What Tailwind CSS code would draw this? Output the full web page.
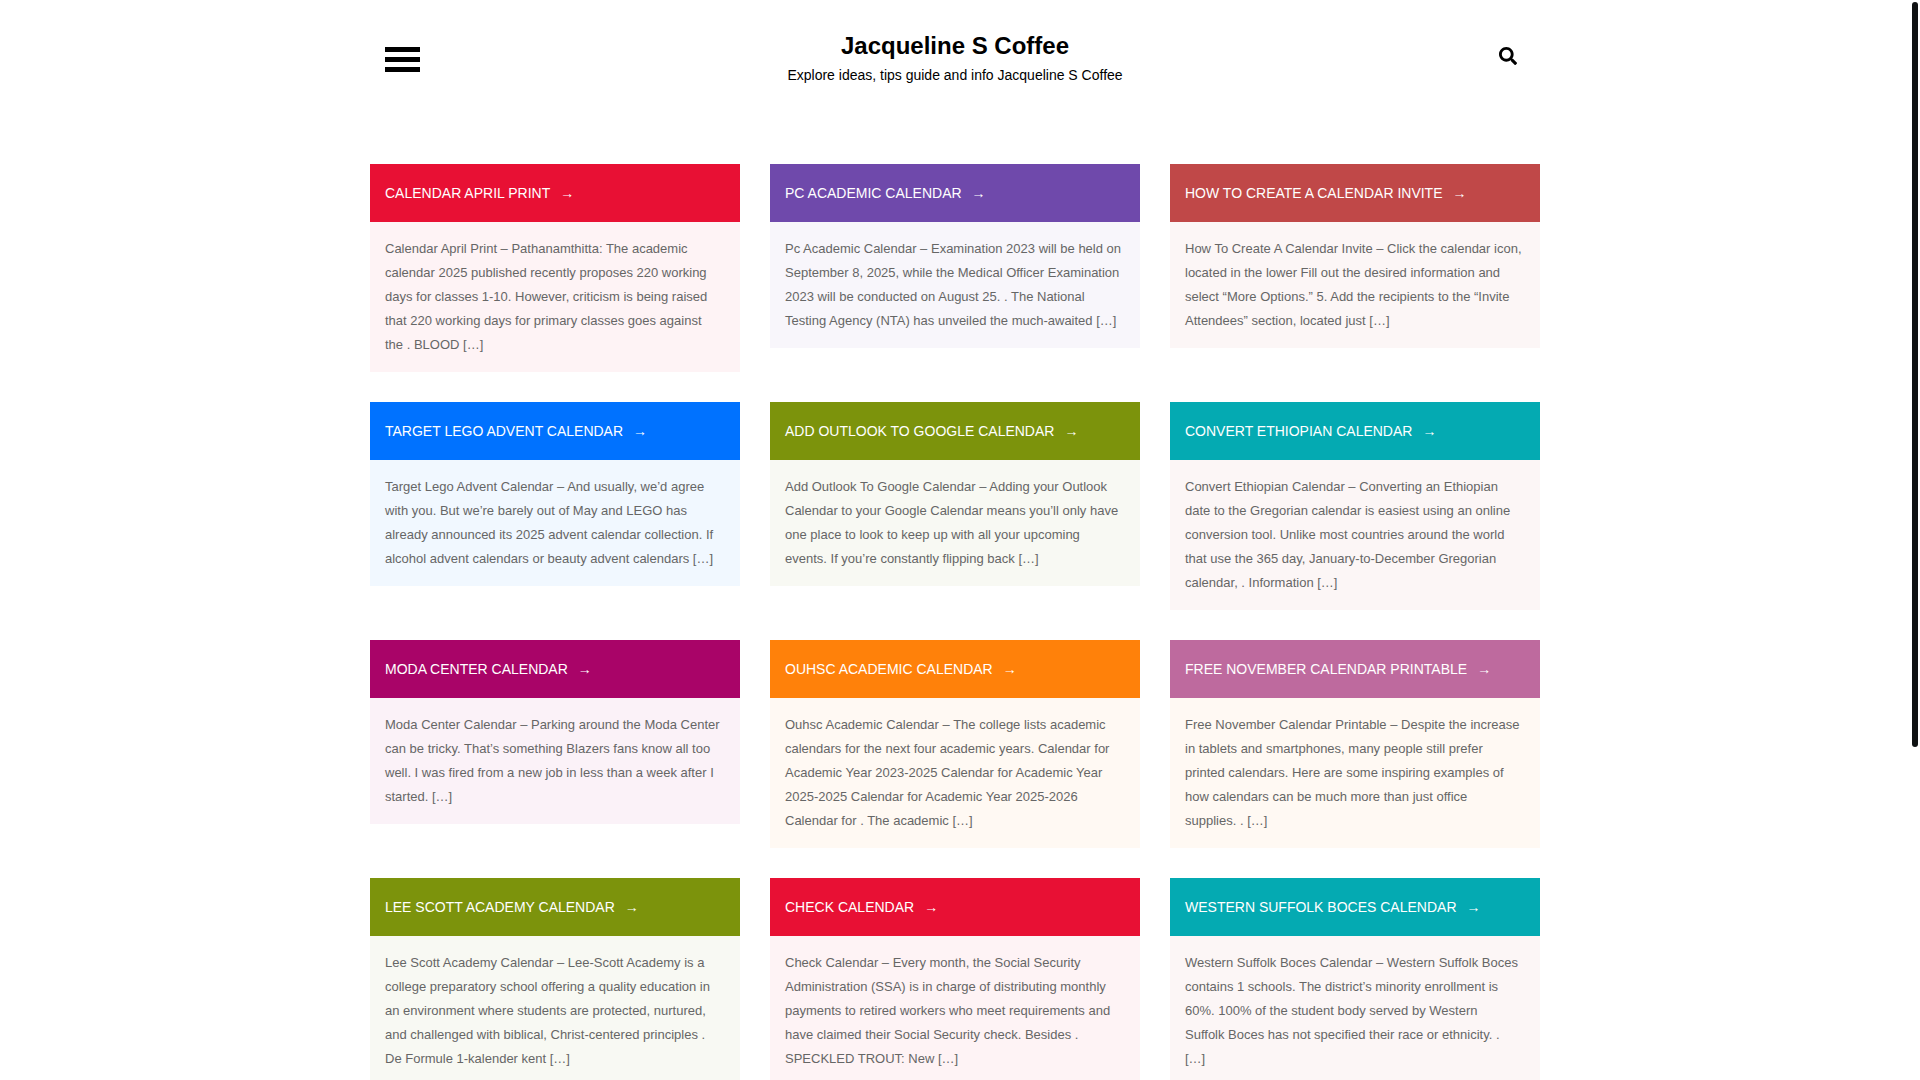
<!DOCTYPE html>
<html lang="en">
<head>
    <meta charset="UTF-8">
    <meta name="viewport" content="width=device-width, initial-scale=1.0">
    <script src="https://cdn.jsdelivr.net/npm/@tailwindcss/browser@4"></script>
    <title>Jacqueline S Coffee</title>
</head>
<body class="bg-white pr-[10px] font-['Liberation_Sans',Arial,sans-serif] text-black">
    <header class="max-w-[1170px] mx-auto px-[15px] pt-[30px] pb-[76px] grid grid-cols-[1fr_auto_1fr] items-start">
        <button type="button" aria-label="Menu" class="mt-[17px] w-[35px] flex flex-col gap-[5px] cursor-pointer">
            <span class="w-full h-[5px] bg-black"></span>
            <span class="w-full h-[5px] bg-black"></span>
            <span class="w-full h-[5px] bg-black"></span>
        </button>
        <div class="text-center">
            <h1 class="text-[24px] leading-8 font-bold"><a href="#">Jacqueline S Coffee</a></h1>
            <p class="text-[14px] leading-[26px]">Explore ideas, tips guide and info Jacqueline S Coffee</p>
        </div>
        <button type="button" aria-label="Search" class="mt-[17px] mr-[8px] justify-self-end cursor-pointer">
            <svg class="w-[18px] h-[18px]" fill="currentColor" viewBox="0 0 512 512" xmlns="http://www.w3.org/2000/svg">
                <path d="M505 442.700L405.300 343c-4.500-4.500-10.600-7-17-7H372c27.600-35.300 44-79.700 44-128C416 93.100 322.900 0 208 0S0 93.100 0 208s93.100 208 208 208c48.300 0 92.700-16.400 128-44v16.300c0 6.400 2.500 12.500 7 17l99.700 99.700c9.400 9.400 24.600 9.400 33.900 0l28.300-28.300c9.400-9.400 9.400-24.600.1-34zM208 336c-70.700 0-128-57.200-128-128 0-70.700 57.200-128 128-128 70.700 0 128 57.200 128 128 0 70.700-57.200 128-128 128z"></path>
            </svg>
        </button>
    </header>

    <main class="max-w-[1170px] mx-auto grid grid-cols-1 md:grid-cols-3 gap-[30px] items-start pb-[30px]">
        <article class="bg-[#fef3f5]">
            <h2 class="bg-[#e81034] px-[15px] py-[15px] text-[14px] leading-7 text-white uppercase"><a href="#">Calendar April Print<span class="ml-[10px]">→</span></a></h2>
            <p class="px-[15px] py-[15px] text-[13px] leading-6 text-[#666666]">Calendar April Print – Pathanamthitta: The academic calendar 2025 published recently proposes 220 working days for classes 1-10. However, criticism is being raised that 220 working days for primary classes goes against <br>the . BLOOD […]</p>
        </article>
        <article class="bg-[#f8f6fb]">
            <h2 class="bg-[#6f49ab] px-[15px] py-[15px] text-[14px] leading-7 text-white uppercase"><a href="#">Pc Academic Calendar<span class="ml-[10px]">→</span></a></h2>
            <p class="px-[15px] py-[15px] text-[13px] leading-6 text-[#666666]">Pc Academic Calendar – Examination 2023 will be held on September 8, 2025, while the Medical Officer Examination 2023 will be conducted on August 25. . The National Testing Agency (NTA) has unveiled the much-awaited […]</p>
        </article>
        <article class="bg-[#fcf6f6]">
            <h2 class="bg-[#c04848] px-[15px] py-[15px] text-[14px] leading-7 text-white uppercase"><a href="#">How To Create A Calendar Invite<span class="ml-[10px]">→</span></a></h2>
            <p class="px-[15px] py-[15px] text-[13px] leading-6 text-[#666666]">How To Create A Calendar Invite – Click the calendar icon, located in the lower Fill out the desired information and select “More Options.” 5. Add the recipients to the “Invite Attendees” section, located just […]</p>
        </article>

        <article class="bg-[#f1f8ff]">
            <h2 class="bg-[#0072ff] px-[15px] py-[15px] text-[14px] leading-7 text-white uppercase"><a href="#">Target Lego Advent Calendar<span class="ml-[10px]">→</span></a></h2>
            <p class="px-[15px] py-[15px] text-[13px] leading-6 text-[#666666]">Target Lego Advent Calendar – And usually, we’d agree with you. But we’re barely out of May and LEGO has already announced its 2025 advent calendar collection. If alcohol advent calendars or beauty advent calendars […]</p>
        </article>
        <article class="bg-[#f8f9f3]">
            <h2 class="bg-[#7c930c] px-[15px] py-[15px] text-[14px] leading-7 text-white uppercase"><a href="#">Add Outlook To Google Calendar<span class="ml-[10px]">→</span></a></h2>
            <p class="px-[15px] py-[15px] text-[13px] leading-6 text-[#666666]">Add Outlook To Google Calendar – Adding your Outlook Calendar to your Google Calendar means you’ll only have one place to look to keep up with all your upcoming events. If you’re constantly flipping back […]</p>
        </article>
        <article class="bg-[#fcf6f6]">
            <h2 class="bg-[#04aab2] px-[15px] py-[15px] text-[14px] leading-7 text-white uppercase"><a href="#">Convert Ethiopian Calendar<span class="ml-[10px]">→</span></a></h2>
            <p class="px-[15px] py-[15px] text-[13px] leading-6 text-[#666666]">Convert Ethiopian Calendar – Converting an Ethiopian date to the Gregorian calendar is easiest using an online conversion tool. Unlike most countries around the world that use the 365 day, January-to-December Gregorian calendar, . Information […]</p>
        </article>

        <article class="bg-[#fbf2f8]">
            <h2 class="bg-[#a90468] px-[15px] py-[15px] text-[14px] leading-7 text-white uppercase"><a href="#">Moda Center Calendar<span class="ml-[10px]">→</span></a></h2>
            <p class="px-[15px] py-[15px] text-[13px] leading-6 text-[#666666]">Moda Center Calendar – Parking around the Moda Center can be tricky. That’s something Blazers fans know all too well. I was fired from a new job in less than a week after I started. […]</p>
        </article>
        <article class="bg-[#fff9f3]">
            <h2 class="bg-[#ff810a] px-[15px] py-[15px] text-[14px] leading-7 text-white uppercase"><a href="#">Ouhsc Academic Calendar<span class="ml-[10px]">→</span></a></h2>
            <p class="px-[15px] py-[15px] text-[13px] leading-6 text-[#666666]">Ouhsc Academic Calendar – The college lists academic calendars for the next four academic years. Calendar for Academic Year 2023-2025 Calendar for Academic Year 2025-2025 Calendar for Academic Year 2025-2026 Calendar for . The academic […]</p>
        </article>
        <article class="bg-[#fff9f3]">
            <h2 class="bg-[#be6a9e] px-[15px] py-[15px] text-[14px] leading-7 text-white uppercase"><a href="#">Free November Calendar Printable<span class="ml-[10px]">→</span></a></h2>
            <p class="px-[15px] py-[15px] text-[13px] leading-6 text-[#666666]">Free November Calendar Printable – Despite the increase in tablets and smartphones, many people still prefer printed calendars. Here are some inspiring examples of how calendars can be much more than just office <br>supplies. . […]</p>
        </article>

        <article class="bg-[#f8f9f3]">
            <h2 class="bg-[#7c930c] px-[15px] py-[15px] text-[14px] leading-7 text-white uppercase"><a href="#">Lee Scott Academy Calendar<span class="ml-[10px]">→</span></a></h2>
            <p class="px-[15px] py-[15px] text-[13px] leading-6 text-[#666666]">Lee Scott Academy Calendar – Lee-Scott Academy is a college preparatory school offering a quality education in an environment where students are protected, nurtured, and challenged with biblical, Christ-centered principles . De Formule 1-kalender kent […]</p>
        </article>
        <article class="bg-[#fef3f5]">
            <h2 class="bg-[#e81034] px-[15px] py-[15px] text-[14px] leading-7 text-white uppercase"><a href="#">Check Calendar<span class="ml-[10px]">→</span></a></h2>
            <p class="px-[15px] py-[15px] text-[13px] leading-6 text-[#666666]">Check Calendar – Every month, the Social Security Administration (SSA) is in charge of distributing monthly payments to retired workers who meet requirements and have claimed their Social Security check. Besides . SPECKLED TROUT: New […]</p>
        </article>
        <article class="bg-[#fcf6f6]">
            <h2 class="bg-[#04aab2] px-[15px] py-[15px] text-[14px] leading-7 text-white uppercase"><a href="#">Western Suffolk Boces Calendar<span class="ml-[10px]">→</span></a></h2>
            <p class="px-[15px] py-[15px] text-[13px] leading-6 text-[#666666]">Western Suffolk Boces Calendar – Western Suffolk Boces contains 1 schools. The district’s minority enrollment is 60%. 100% of the student body served by Western <br>Suffolk Boces has not specified their race or ethnicity. . <br>[…]</p>
        </article>
    </main>

    <!-- scroll indicator -->
    <div class="fixed top-[2px] right-[2px] w-[6px] h-[69%] rounded-full bg-[#0f1112]"></div>
</body>
</html>
